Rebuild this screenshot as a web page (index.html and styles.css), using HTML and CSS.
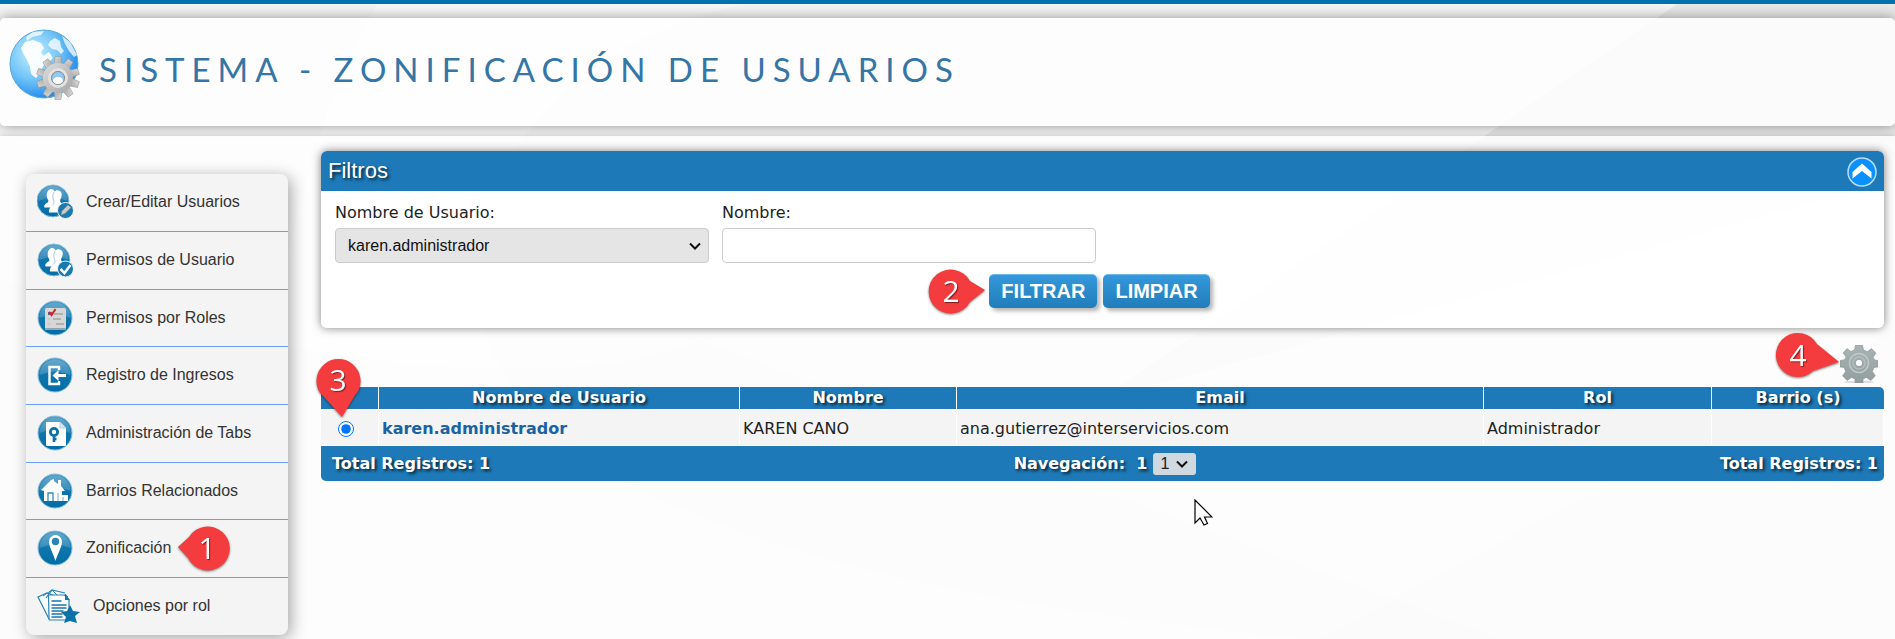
FILE: index.html
```html
<!DOCTYPE html>
<html lang="es">
<head>
<meta charset="utf-8">
<title>Sistema - Zonificación de Usuarios</title>
<link rel="stylesheet" href="styles.css">
</head>
<body>
<svg width="0" height="0" class="defs" aria-hidden="true">
  <defs>
    <radialGradient id="globe" cx=".35" cy=".35" r=".7"><stop offset="0" stop-color="#c9f1fd"/><stop offset=".55" stop-color="#6fc3f7"/><stop offset="1" stop-color="#1c86ee"/></radialGradient>
    <linearGradient id="disc" x1="0" y1="0" x2="0" y2="1"><stop offset="0" stop-color="#4b9bc5"/><stop offset=".5" stop-color="#0f76ad"/><stop offset="1" stop-color="#006ca6"/></linearGradient>
    <linearGradient id="metal" x1="0" y1="0" x2="1" y2="1"><stop offset="0" stop-color="#dedede"/><stop offset="1" stop-color="#a4a4a4"/></linearGradient>
    <linearGradient id="steel" x1="0" y1="0" x2="0" y2="1"><stop offset="0" stop-color="#a9b4b4"/><stop offset="1" stop-color="#929e9f"/></linearGradient>
    <g id="people"><path d="M13.500 6.500c2.200-1 4.500 0 5 2 1.800-2 6-1.500 7 1.500.6 2-.1 4.500-1.200 6.500-.5 2 .2 3 1.700 4l2.500 2.500-8 6.500H13c-.5-2.500.5-4 1.500-5H8.500c-1-2 1-4 3-5 1.500-.8 1-2 0-3.500-1.500-3-1-8 2-9.500z" fill="#fff"/><path d="M18.200 9c-2 2.500-1.500 6-.5 8.500.8 2 0 3.500-1.700 5" stroke="#8bbcd8" stroke-width=".8" fill="none"/></g>
    <g id="base"><circle cx="18" cy="18" r="17" fill="url(#disc)" stroke="#8abdd9" stroke-width="1"/><path d="M2.500 18a15.500 15.500 0 0 1 31 0q-15-7-31 0z" fill="#fff" opacity=".16"/></g>
    <path id="tooth" d="M-4-13l1-8.500h6l1 8.500z"/>
  </defs>
</svg>
<svg class="backdrop" viewBox="0 0 1895 639" preserveAspectRatio="none" aria-hidden="true">
  <rect width="1895" height="639" fill="#f5f5f5"/>
  <path d="M1683 0L1470 146 1100 400 1895 180V0z" fill="#dcdcdc" opacity=".5"/>
  <path d="M0 280Q500 420 700 340L1500 639H0z" fill="#e9e9e9" opacity=".4"/>
  <path d="M380 0Q280 150 230 639H1300Q500 560 480 300 480 60 760 0z" fill="#fff" opacity=".3"/>
  <path d="M1320 639L1895 330V639z" fill="#e6e6e6" opacity=".5"/>
</svg>
<header class="banner">
  <svg class="banner-icon" viewBox="0 0 72 72" aria-hidden="true">
    <circle cx="35" cy="35" r="34" fill="url(#globe)" stroke="#5cacd8" stroke-width="1"/>
    <path d="M16 13l8-2 8 3 3 5-3 4 2 4 6-4 4 6-5 5-5 3-2 6-5 6-5-4-1-7-3-7-4-7-2-5z" fill="#fff" opacity=".92"/>
    <path d="M17 8l7-5 11-1-3 4-9 2-5 4z M41 12l5-3 5 3 1 6 3 4-3 3-4-4-5-1-4-4z M53 7l8 6 7 13-3 2-5-6-4-7z" fill="#fff" opacity=".75"/>
    <g transform="translate(49 49)"><g fill="url(#metal)" stroke="#8d8d8d" stroke-width=".5"><use href="#tooth"/><use href="#tooth" transform="rotate(36)"/><use href="#tooth" transform="rotate(72)"/><use href="#tooth" transform="rotate(108)"/><use href="#tooth" transform="rotate(144)"/><use href="#tooth" transform="rotate(180)"/><use href="#tooth" transform="rotate(216)"/><use href="#tooth" transform="rotate(252)"/><use href="#tooth" transform="rotate(288)"/><use href="#tooth" transform="rotate(324)"/></g><circle r="15" fill="url(#metal)"/><circle r="8.500" fill="none" stroke="#e2e2e2" stroke-width="3"/><circle r="6.500" fill="#8fc9f4" stroke="#8a8a8a"/><ellipse cy="2.500" rx="5" ry="3.500" fill="#fff"/></g>
  </svg>
  <h1 class="banner-title">SISTEMA - ZONIFICACIÓN DE USUARIOS</h1>
</header>
<main class="page">
  <nav class="side">
    <a class="side-item" href="#"><svg class="side-icon" viewBox="0 0 36 36"><g transform="translate(-1 0) scale(.94)"><use href="#base"/></g><g transform="translate(-1 -1)"><use href="#people"/></g><circle cx="28.500" cy="26.500" r="8" fill="#1a7ab0" stroke="#eef5f9"/><path d="M24 31l1-4 6-6 3 2.500-6 6z" fill="#c9cccd" stroke="#888" stroke-width=".6"/></svg>Crear/Editar Usuarios</a>
    <a class="side-item" href="#"><svg class="side-icon" viewBox="0 0 36 36"><g transform="translate(0 1) scale(.94)"><use href="#base"/></g><use href="#people"/><circle cx="28.500" cy="27" r="8" fill="#1a7ab0" stroke="#eef5f9"/><path d="M23.500 27l4 4 6-8" fill="none" stroke="#fff" stroke-width="2.500"/></svg>Permisos de Usuario</a>
    <a class="side-item" href="#"><svg class="side-icon" viewBox="0 0 36 36"><use href="#base"/><rect x="8" y="8" width="21" height="22" rx="1.500" fill="#d7d7d7"/><path d="M8 29h21" stroke="#8fa5b1" stroke-width="2"/><path d="M17 14h9M16 19h8M19 24h8" stroke="#a5a5a5" stroke-width="1.300"/><path d="M10.500 19h3M10.500 24h3" stroke="#bbb"/><path d="M11 12h4v3h-4z" fill="#4a6ea0"/><path d="M12 12l2.500 3 4-6" stroke="#d5232b" stroke-width="2" fill="none"/></svg>Permisos por Roles</a>
    <a class="side-item" href="#"><svg class="side-icon" viewBox="0 0 36 36"><use href="#base"/><path d="M22 13v-3H12.500v17H22v-3" fill="none" stroke="#fff" stroke-width="2.400"/><path d="M15.500 18.500l6-5.500v4H29v3h-7.500v4z" fill="#fff"/></svg>Registro de Ingresos</a>
    <a class="side-item" href="#"><svg class="side-icon" viewBox="0 0 36 36"><use href="#base"/><path d="M9 7h14l6 6v17q0 1-1 1H10q-1 0-1-1z" fill="#fff"/><path d="M23 7v6h6" fill="#d9eaf3" stroke="#9cc4da" stroke-width=".8"/><circle cx="17" cy="17" r="3.600" fill="none" stroke="#0b70a8" stroke-width="2.800"/><path d="M17 20v7M17 24h2.500" stroke="#0b70a8" stroke-width="2.600"/></svg>Administración de Tabs</a>
    <a class="side-item" href="#"><svg class="side-icon" viewBox="0 0 36 36"><use href="#base"/><path d="M4 17L14 7l3-1V8l4 3V7h3v6l4 5h-3v10H7V18z" fill="#fff"/><path d="M11 28v-8h5v8" fill="none" stroke="#3288b8" stroke-width="1.300"/><path d="M23 22h8v6h-8z" fill="#fff"/><path d="M21 20v8M26 24v4" stroke="#74afce"/></svg>Barrios Relacionados</a>
    <a class="side-item" href="#"><svg class="side-icon" viewBox="0 0 36 36"><use href="#base"/><path d="M18.500 31C17 25 12 17 12 11.500a6.500 6.500 0 0 1 13 0C25 17 20 25 18.500 31z" fill="#fff"/><circle cx="18.500" cy="11.500" r="3.700" fill="#2a84b6"/></svg>Zonificación
      <svg class="callout callout-left" viewBox="0 0 54 46"><path d="M1 21L12 11A22 22 0 1 1 11 32z" fill="#f43b3d"/><text x="30" y="33" class="callout-num">1</text></svg></a>
    <a class="side-item" href="#"><svg class="side-icon side-icon-wide" viewBox="0 0 43 36"><path d="M12 31L1 9l9-4 8 3M9 10l6-8 13 3" fill="#f7fbfd" stroke="#2a83b5" stroke-width="1.200"/><path d="M6 8l9-6 5 5M28 6l3 3" fill="none" stroke="#2a83b5"/><path d="M11.500 7h16l4.500 5v20H13q-1 0-1-1z" fill="#fff" stroke="#2a83b5" stroke-width="1.200"/><path d="M28 6v6h5z" fill="#1976ac"/><path d="M14.500 13h10M14.500 17h15M14.500 20h15M14.500 23h12M14.500 26h11M14.500 29h11" stroke="#1976ac" stroke-width="1.600"/><path d="M33 17l3 6 7 1-5 4 2 7-7-2-6 2 2-6-5-5 6-1z" fill="#0c71a9"/></svg>Opciones por rol</a>
  </nav>
  <div class="content">
    <section class="panel">
      <div class="panel-head"><h2 class="panel-title">Filtros</h2>
        <button class="icon-btn" type="button" aria-label="Contraer"><svg class="collapse" viewBox="0 0 30 30"><circle cx="15" cy="15" r="14" fill="#0a91ff" stroke="#b9dcf5" stroke-width="1.500"/><path d="M15 6.500l9.500 8.500v6.500L15 14l-9.500 7.500V15z" fill="#fff"/></svg></button>
      </div>
      <form class="filters">
        <div class="fields">
          <div class="field"><label for="usuario">Nombre de Usuario:</label><div class="pick-box"><select id="usuario" class="control control-select"><option>karen.administrador</option></select><svg class="chevron" viewBox="0 0 12 8"><path d="M1 1.500l5 5 5-5"/></svg></div></div>
          <div class="field"><label for="nombre">Nombre:</label><input id="nombre" class="control" type="text"></div>
        </div>
        <div class="actions">
          <div class="action-group">
            <svg class="callout callout-right" viewBox="0 0 58 46"><path d="M57 21L42 12A22 22 0 1 0 42 33z" fill="#f43b3d"/><text x="23" y="33" class="callout-num">2</text></svg>
            <button class="btn" type="button">FILTRAR</button>
            <button class="btn" type="button">LIMPIAR</button>
          </div>
        </div>
      </form>
    </section>
    <div class="tools">
      <div class="tool">
        <button class="icon-btn" type="button" aria-label="Opciones"><svg class="gear" viewBox="0 0 38 38"><ellipse cx="19" cy="37" rx="15" ry="1.500" fill="#ddd"/><g fill="url(#steel)" stroke="#8a9696" stroke-width=".6"><path d="M15.500 0h7l1 5 4 1.600 4-3 4.500 4.600-3 4L34.600 15l3.400.5v6.500l-4 .5-1.600 4 3 4.200-4.500 4.800-4.500-3-3.400 1.500V38h-8v-4l-3.400-1.500-4.500 3-4.500-4.800 3-4.200-1.600-4-4-.5v-6.500l4.500-.7 1.600-2.800-3-4L7 3.600l4 3L14.500 5z"/></g><circle cx="19" cy="18" r="9.500" fill="none" stroke="#c1caca" stroke-width="1.500"/><circle cx="19" cy="18" r="6" fill="none" stroke="#b3bdbd" stroke-width="1.500"/><circle cx="19" cy="18" r="3" fill="#fff"/></svg></button>
        <svg class="callout callout-gear" viewBox="0 0 64 46"><path d="M63 29L41 11A22 22 0 1 0 37 38z" fill="#f43b3d"/><text x="22" y="33" class="callout-num">4</text></svg>
      </div>
    </div>
    <table class="grid">
      <colgroup><col class="c-pick"><col class="c-user"><col class="c-name"><col class="c-mail"><col class="c-role"><col class="c-area"></colgroup>
      <thead><tr><th></th><th>Nombre de Usuario</th><th>Nombre</th><th>Email</th><th>Rol</th><th>Barrio (s)</th></tr></thead>
      <tbody><tr>
        <td class="pick"><input class="radio" type="radio" name="fila" checked aria-label="karen.administrador"><svg class="callout callout-down" viewBox="0 0 46 60"><path d="M26 59L38 39Q39 37 41 35A22 22 0 1 0 4 35Q6 37 8 39z" fill="#f43b3d"/><text x="22" y="33" class="callout-num">3</text></svg></td>
        <td><a class="user-link" href="#">karen.administrador</a></td><td>KAREN CANO</td><td>ana.gutierrez@interservicios.com</td><td>Administrador</td><td></td>
      </tr></tbody>
      <tfoot><tr><td colspan="6"><div class="foot">
        <span>Total Registros: 1</span>
        <div class="pager"><label for="pagina">Navegación:&nbsp; 1</label><div class="pick-box"><select id="pagina" class="page-select"><option>1</option></select><svg class="chevron" viewBox="0 0 12 8"><path d="M1 1.500l5 5 5-5"/></svg></div></div>
        <span class="foot-end">Total Registros: 1</span>
      </div></td></tr></tfoot>
    </table>
  </div>
  <svg class="pointer" viewBox="0 0 19 28" aria-hidden="true"><path d="M1 1v23l5-5 4 7 3.500-1.500L10.500 18H18z" fill="#fff" stroke="#000" stroke-width="1.200"/></svg>
</main>
</body>
</html>
```
FILE: styles.css
```css
* { box-sizing: border-box; }
body {
  margin: 0;
  min-height: 100vh;
  border-top: 4px solid #0072ac;
  font-family: "DejaVu Sans", Verdana, sans-serif;
  font-size: 16px;
  color: #222;
  overflow: hidden;
  display: flex;
  flex-direction: column;
}
.defs { position: absolute; }
.backdrop { position: absolute; left: 0; top: 0; width: 100%; height: 100%; z-index: -1; }

.banner {
  margin: 14px 0 10px;
  padding: 11px 9px 25px;
  display: flex;
  align-items: center;
  gap: 18px;
  background: rgba(255, 255, 255, .8);
  border-radius: 5px;
  box-shadow: 0 0 14px rgba(0, 0, 0, .4);
}
.banner-icon { width: 72px; height: 72px; flex: none; }
.banner-title {
  margin: 0;
  padding-top: 8px;
  font: 400 33px/48px Lato, sans-serif;
  letter-spacing: 7px;
  color: #3476a6;
}

.page {
  position: relative;
  flex: 1;
  display: flex;
  align-items: flex-start;
  gap: 33px;
  padding: 15px 11px 0 26px;
  background: rgba(255, 255, 255, .8);
  box-shadow: 0 0 5px rgba(0, 0, 0, .2);
}

.side {
  flex: none;
  width: 262px;
  margin-top: 23px;
  background: #f4f4f4;
  border-radius: 8px;
  box-shadow: 3px 3px 16px rgba(0, 0, 0, .35);
}
.side-item {
  position: relative;
  display: flex;
  align-items: center;
  gap: 13px;
  height: 58px;
  padding: 0 11px 1px;
  border-bottom: 1px solid #6a9ff5;
  font-family: "Liberation Sans", Arial, sans-serif;
  color: #333;
  text-decoration: none;
}
.side-item:nth-child(3n) { height: 57px; }
.side-item:last-child { height: 57px; border-bottom: 0; }
.side-icon { width: 36px; height: 36px; flex: none; }
.side-icon-wide { width: 43px; }

.callout { position: absolute; z-index: 2; overflow: visible; filter: drop-shadow(0 1px 1px rgba(0, 0, 0, .5)); }
.callout-num {
  font: 30px "Open Sans", sans-serif;
  fill: #fff;
  text-anchor: middle;
  text-shadow: 1px 1px 1px rgba(0, 0, 0, .5);
}
.callout-left { left: 151px; top: 6px; width: 54px; height: 46px; }
.callout-right { right: 100%; top: -5px; width: 58px; height: 46px; margin-right: 3px; }
.callout-down { left: -5px; top: -52px; width: 46px; height: 60px; }
.callout-gear { right: 100%; top: -12px; width: 64px; height: 46px; }

.content { flex: 1; min-width: 0; }
.panel {
  background: rgba(255, 255, 255, .75);
  border-radius: 6px;
  box-shadow: 0 0 10px rgba(0, 0, 0, .5);
}
.panel-head {
  display: flex;
  align-items: center;
  justify-content: space-between;
  height: 40px;
  padding: 2px 7px 0;
  background: #1d79b7;
  border-radius: 6px 6px 0 0;
}
.panel-title {
  margin: 0;
  padding-bottom: 3px;
  font: 400 22px/35px "Liberation Sans", Arial, sans-serif;
  color: #fff;
  text-shadow: 2px 2px 3px rgba(0, 0, 0, .7);
}
.icon-btn { display: block; padding: 0; border: 0; background: none; }
.icon-btn svg { display: block; }
.collapse { width: 30px; height: 30px; }
.filters { padding: 11px 14px 20px; }
.fields { display: flex; gap: 13px; }
.field { display: flex; flex-direction: column; gap: 5px; width: 374px; line-height: 21px; }
.pick-box { position: relative; display: flex; }
.chevron {
  position: absolute;
  right: 8px;
  top: calc(50% - 4px);
  width: 12px;
  height: 8px;
  fill: none;
  stroke: #111;
  stroke-width: 2;
  pointer-events: none;
}
.control {
  width: 100%;
  height: 35px;
  padding: 0 12px;
  border: 1px solid #ccc;
  border-radius: 4px;
  background-color: #fff;
  font: 16px "Liberation Sans", Arial, sans-serif;
  color: #111;
}
.control-select { appearance: none; background-color: #e5e5e5; }
.actions { display: flex; justify-content: center; padding: 11px 6px 0 0; }
.action-group { position: relative; display: flex; gap: 6px; }
.btn {
  height: 34px;
  padding: 0 12px;
  border: 0;
  border-top: 1px solid #6fb7ea;
  border-radius: 5px;
  background: linear-gradient(#3498db, #217dba);
  box-shadow: 3px 3px 4px rgba(0, 0, 0, .3);
  font: bold 20px "Liberation Sans", Arial, sans-serif;
  color: #fff;
}

.tools { display: flex; justify-content: flex-end; padding: 17px 6px 4px; }
.tool { position: relative; }
.gear { width: 38px; height: 38px; }

.grid { width: 100%; table-layout: fixed; border-collapse: separate; border-spacing: 0; }
.c-pick { width: 58px; }
.c-user { width: 361px; }
.c-name { width: 217px; }
.c-mail { width: 527px; }
.c-role { width: 228px; }
.grid th {
  height: 23px;
  padding: 0;
  background: #1d79b7;
  border-right: 1px solid #fff;
  border-bottom: 1px solid #fff;
  line-height: 22px;
  color: #fff;
  text-shadow: 2px 2px 3px rgba(0, 0, 0, .7);
}
.grid th:last-child { border-right: 0; border-top-right-radius: 5px; }
.grid tbody td {
  height: 36px;
  padding: 2px 3px 0;
  background: #f4f4f4;
  border-right: 1px solid #fff;
  border-bottom: 1px solid #fff;
}
.grid tbody .pick { position: relative; padding: 2px 0 0 17px; }
.radio { display: block; width: 16px; height: 16px; margin: 0; }
.user-link { font-weight: bold; color: #1a62a3; text-decoration: none; }
.grid tfoot td { padding: 0; background: #1d79b7; border-radius: 0 0 5px 5px; }
.foot {
  display: grid;
  grid-template-columns: 1fr auto 1fr;
  align-items: center;
  height: 35px;
  padding: 0 6px 0 11px;
  font-weight: bold;
  color: #fff;
  text-shadow: 2px 2px 3px rgba(0, 0, 0, .7);
}
.foot-end { text-align: right; }
.pager { display: flex; align-items: center; gap: 6px; }
.page-select {
  appearance: none;
  height: 22px;
  width: 43px;
  padding: 0 7px;
  border: 0;
  border-radius: 3px;
  background-color: #d1d8e0;
  font: 16px "Liberation Sans", Arial, sans-serif;
  color: #222;
}
.pointer { position: absolute; left: 63%; top: 363px; width: 19px; height: 28px; }
```
